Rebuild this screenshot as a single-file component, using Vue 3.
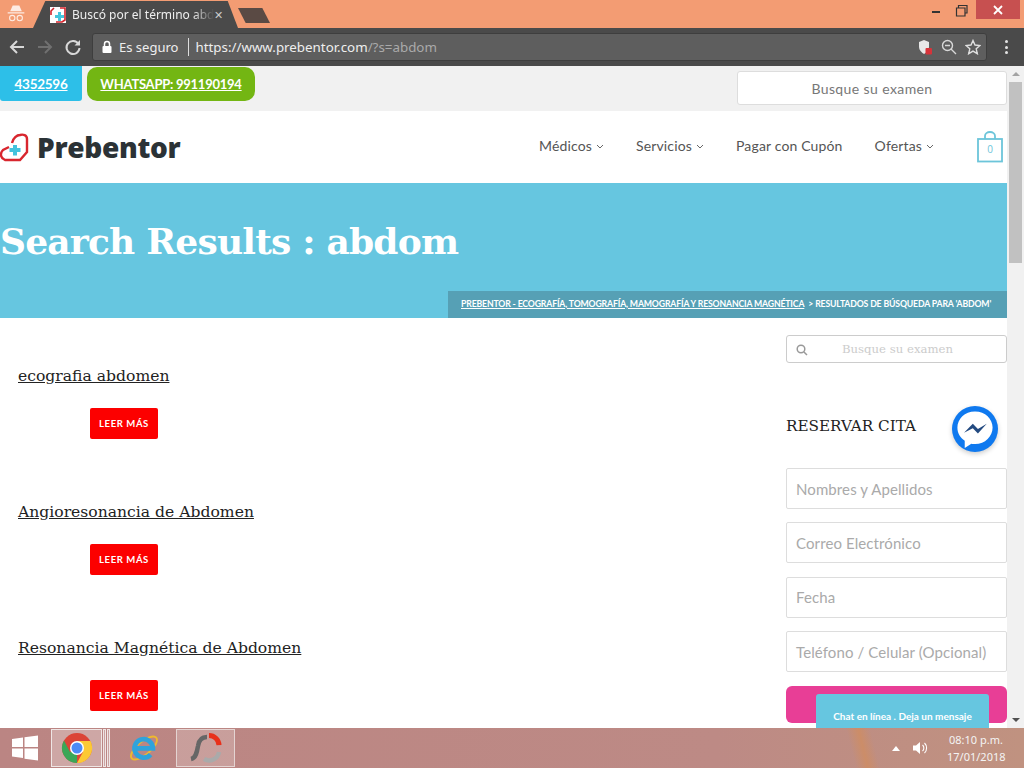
<template>
  <div class="screen">
    <!-- browser tabs -->
    <div class="tabstrip">
      <svg class="incognito" width="20" height="20" viewBox="0 0 24 24">
        <path d="M5 10 L8 3 H16 L19 10 Z M2 11 H22 V12.500 H2 Z" fill="#fff" opacity=".8" />
        <circle cx="7.500" cy="18" r="3.200" fill="none" stroke="#fff" stroke-width="1.300" opacity=".8" />
        <circle cx="16.500" cy="18" r="3.200" fill="none" stroke="#fff" stroke-width="1.300" opacity=".8" />
      </svg>
      <div class="tab">
        <svg class="favicon" width="16" height="16" viewBox="0 0 16 16">
          <rect width="16" height="16" fill="#fff" />
          <path d="M1 8 L1 4 L4 1 M10 1 H15 V13 L12 15 H6" fill="none" stroke="#d4232b" stroke-width="1.600" />
          <path d="M8 5 H11 V8 H14 V11 H11 V14 H8 V11 H5 V8 H8 Z" fill="#45c6dd" />
        </svg>
        <span class="tab-title">Buscó por el término abd</span>
        <span class="tab-close">✕</span>
      </div>
      <div class="new-tab"></div>
      <div class="window-btns">
        <svg width="12" height="12" viewBox="0 0 12 12"><rect x="2" y="7" width="8" height="2" fill="#333" /></svg>
        <svg width="14" height="14" viewBox="0 0 14 14"><path d="M3.500 3.500 V1.500 H12 V9 H10 M1.500 4 H10 V12 H1.500 Z" fill="none" stroke="#333" stroke-width="1.200" /></svg>
        <div class="win-close">
          <svg width="10" height="10" viewBox="0 0 10 10"><path d="M1 1 L9 9 M9 1 L1 9" stroke="#fff" stroke-width="1.800" /></svg>
        </div>
      </div>
    </div>

    <!-- browser toolbar -->
    <div class="toolbar">
      <svg width="18" height="18" viewBox="0 0 18 18"><path d="M16 9 H3 M9 3 L3 9 L9 15" fill="none" stroke="#d8d8d8" stroke-width="2" /></svg>
      <svg width="18" height="18" viewBox="0 0 18 18"><path d="M2 9 H15 M9 3 L15 9 L9 15" fill="none" stroke="#707070" stroke-width="2" /></svg>
      <svg width="18" height="18" viewBox="0 0 18 18"><path d="M14.500 6 A6.500 6.500 0 1 0 15.500 10" fill="none" stroke="#d8d8d8" stroke-width="2" /><path d="M16 2 V7.500 H10.500 Z" fill="#d8d8d8" /></svg>
      <div class="omnibox">
        <svg class="lock" width="12" height="14" viewBox="0 0 12 14"><rect x="1.500" y="6" width="9" height="7" rx="1" fill="#fff" /><path d="M3.500 6 V4 A2.500 2.500 0 0 1 8.500 4 V6" fill="none" stroke="#fff" stroke-width="1.500" /></svg>
        <span class="secure">Es seguro</span>
        <span class="url"><b>https://www.prebentor.com</b>/?s=abdom</span>
        <svg class="shield" width="16" height="16" viewBox="0 0 16 16">
          <path d="M7 1 L12 3 V8 C12 11 9.500 13.500 7 15 C4.500 13.500 2 11 2 8 V3 Z" fill="#e8e8e8" />
          <rect x="8.500" y="9" width="6.500" height="6.500" rx="1" fill="#d6333a" />
        </svg>
        <svg width="16" height="16" viewBox="0 0 16 16"><circle cx="6.500" cy="6.500" r="5" fill="none" stroke="#d8d8d8" stroke-width="1.400" /><path d="M10 10 L15 15 M4 6.500 H9" stroke="#d8d8d8" stroke-width="1.400" /></svg>
        <svg width="16" height="16" viewBox="0 0 16 16"><path d="M8 1.500 L10 6 L15 6.500 L11.200 9.800 L12.300 14.700 L8 12.100 L3.700 14.700 L4.800 9.800 L1 6.500 L6 6 Z" fill="none" stroke="#e0e0e0" stroke-width="1.400" /></svg>
      </div>
      <div class="dots"><i></i><i></i><i></i></div>
    </div>

    <!-- page -->
    <div class="viewport">
      <div class="page">
        <div class="topbar">
          <div class="top-btns">
            <a class="phone">4352596</a>
            <a class="whatsapp">WHATSAPP: 991190194</a>
          </div>
          <div class="top-search">Busque su examen</div>
        </div>

        <header class="header">
          <div class="logo">
            <svg width="30" height="30" viewBox="0 0 30 30">
              <path d="M9 15 L3 18 C0 21 0 26 5 28 H20 L27 20 V7 C27 3 23 2 20 3 C17 3 13 6 12 11" fill="none" stroke="#d8262e" stroke-width="2.400" />
              <path d="M13 13 H17 V16 H20.500 V20 H17 V23.500 H13 V20 H9.500 V16 H13 Z" fill="#43c3dd" />
            </svg>
            <span class="logo-text">Prebentor</span>
          </div>
          <nav class="nav">
            <a v-for="item in nav" :key="item.label" class="nav-item">
              {{ item.label }}
              <svg v-if="item.arrow" width="8" height="6" viewBox="0 0 8 6"><path d="M1 1 L4 4 L7 1" fill="none" stroke="#666" stroke-width="1" /></svg>
            </a>
          </nav>
          <div class="cart">
            <svg width="26" height="32" viewBox="0 0 26 32">
              <path d="M8 8 V5 A5 4 0 0 1 18 5 V8" fill="none" stroke="#6cc5da" stroke-width="1.800" />
              <rect x="1" y="8" width="24" height="22.500" fill="#fff" stroke="#6cc5da" stroke-width="1.800" />
            </svg>
            <span class="cart-count">0</span>
          </div>
        </header>

        <section class="hero">
          <h1 class="hero-title">Search Results : abdom</h1>
          <div class="crumbs">
            <a>PREBENTOR - ECOGRAFÍA, TOMOGRAFÍA, MAMOGRAFÍA Y RESONANCIA MAGNÉTICA</a>
            <span>&gt; RESULTADOS DE BÚSQUEDA PARA 'ABDOM'</span>
          </div>
        </section>

        <div class="content">
          <main class="results">
            <article v-for="r in results" :key="r" class="result">
              <a class="result-title">{{ r }}</a>
              <button class="more">LEER MÁS</button>
            </article>
          </main>
          <aside class="sidebar">
            <div class="side-search">
              <svg width="12" height="12" viewBox="0 0 12 12"><circle cx="5" cy="5" r="3.800" fill="none" stroke="#999" stroke-width="1.500" /><path d="M8 8 L11 11" stroke="#999" stroke-width="1.500" /></svg>
              <span>Busque su examen</span>
            </div>
            <h3 class="side-title">RESERVAR CITA</h3>
            <div class="form">
              <div v-for="f in fields" :key="f" class="field">{{ f }}</div>
              <div class="send"></div>
            </div>
          </aside>
        </div>

        <!-- floating widgets -->
        <div class="messenger">
          <svg width="44" height="44" viewBox="0 0 30 30">
            <path d="M15 3 C8 3 3 8 3 14 C3 18 5 21 8 23 V28 L12.500 25 C13.500 25.300 14 25.300 15 25.300 C22 25.300 27 20 27 14 C27 8 22 3 15 3 Z" fill="#fff" />
            <path d="M7.500 17.500 L13.500 11.500 L17 15 L23 11.500 L17 18 L13.500 14.500 Z" fill="#234a80" />
          </svg>
        </div>
        <div class="chat-tab">Chat en línea . Deja un mensaje</div>
      </div>

      <div class="scrollbar">
        <span class="arrow up"></span>
        <div class="track"><div class="thumb"></div></div>
        <span class="arrow down"></span>
      </div>
    </div>

    <!-- windows taskbar -->
    <div class="taskbar">
      <svg class="start" width="26" height="26" viewBox="0 0 26 26">
        <path d="M0 4 L11 2.500 V12 H0 Z M12.500 2.300 L26 0.500 V12 H12.500 Z M0 13.500 H11 V23 L0 21.500 Z M12.500 13.500 H26 V25.500 L12.500 23.700 Z" fill="#fff" />
      </svg>
      <div class="task active">
        <svg width="32" height="32" viewBox="0 0 32 32">
          <circle cx="16" cy="16" r="15" fill="#db4437" />
          <path d="M16 16 L3 23.500 A15 15 0 0 0 16 31 Z M3 23.500 A15 15 0 0 1 3 8.500 L9 20 Z" fill="#3aa757" />
          <path d="M16 9 H29.500 A15 15 0 0 1 16 31 L22 20 Z" fill="#fcc934" />
          <circle cx="16" cy="16" r="7" fill="#fff" />
          <circle cx="16" cy="16" r="5.500" fill="#4c8bf5" />
        </svg>
      </div>
      <div class="task-edge"></div>
      <div class="task-edge"></div>
      <div class="task ie">
        <svg width="32" height="32" viewBox="0 0 34 34">
          <ellipse cx="17" cy="17" rx="17" ry="7" transform="rotate(-40 17 17)" fill="none" stroke="#efb92e" stroke-width="2" />
          <path d="M7.500 17.500 H26.500 A9.800 9.800 0 1 0 24 24" fill="none" stroke="#2fa3dc" stroke-width="5" />
        </svg>
      </div>
      <div class="task app">
        <svg width="36" height="32" viewBox="0 0 36 32">
          <path d="M3 27 C8 26 9 20 10 14 C11 7 15 5 19 5" fill="none" stroke="#666" stroke-width="4.500" />
          <path d="M21 3.500 A10 10 0 0 1 31 13" fill="none" stroke="#e8301a" stroke-width="5" />
          <path d="M16 27 A10 10 0 0 0 31 20" fill="none" stroke="#aaa" stroke-width="4.500" />
        </svg>
      </div>
      <div class="glow"></div>
      <div class="tray">
        <span class="tray-up"></span>
        <svg width="18" height="16" viewBox="0 0 18 16">
          <path d="M1 5.500 H4 L8 2 V14 L4 10.500 H1 Z" fill="#fff" />
          <path d="M10.500 5 A4 4 0 0 1 10.500 11 M12.500 3 A7 7 0 0 1 12.500 13" fill="none" stroke="#fff" stroke-width="1.100" />
        </svg>
        <div class="clock">
          <div>08:10 p.m.</div>
          <div>17/01/2018</div>
        </div>
      </div>
    </div>
  </div>
</template>

<script setup>
const nav = [
  { label: 'Médicos', arrow: true },
  { label: 'Servicios', arrow: true },
  { label: 'Pagar con Cupón', arrow: false },
  { label: 'Ofertas', arrow: true }
]

const results = ['ecografia abdomen', 'Angioresonancia de Abdomen', 'Resonancia Magnética de Abdomen']

const fields = ['Nombres y Apellidos', 'Correo Electrónico', 'Fecha', 'Teléfono / Celular (Opcional)']
</script>

<style>
html, body { margin: 0; overflow: hidden; }
</style>

<style scoped>
.screen {
  width: 1024px;
  height: 768px;
  display: flex;
  flex-direction: column;
  overflow: hidden;
  font-family: "Open Sans", sans-serif;
  background: #fff;
}

/* tabs */
.tabstrip {
  height: 28px;
  flex: none;
  display: flex;
  align-items: flex-end;
  background: #f39c73;
}
.incognito { margin: 0 0 5px 6px; }
.tab {
  width: 205px;
  height: 27px;
  margin-left: 7px;
  box-sizing: border-box;
  padding-left: 17px;
  display: flex;
  align-items: center;
  background: #4a4a4a;
  clip-path: polygon(0 100%, 6% 0, 95% 0, 100% 100%);
}
.favicon { flex: none; }
.tab-title {
  margin-left: 6px;
  white-space: nowrap;
  font-size: 12px;
  color: #eee;
  font-family: "Noto Sans", sans-serif;
  -webkit-mask-image: linear-gradient(to right, #000 85%, transparent);
  mask-image: linear-gradient(to right, #000 85%, transparent);
}
.tab-close { font-size: 11px; line-height: 14px; color: #ccc; margin-left: auto; margin-right: 16px; }
.new-tab {
  width: 32px;
  height: 15px;
  margin-bottom: 5px;
  background: #5a4a44;
  clip-path: polygon(0 0, 76% 0, 100% 100%, 24% 100%);
}
.window-btns {
  margin-left: auto;
  margin-right: 4px;
  align-self: flex-start;
  display: flex;
  align-items: flex-start;
  gap: 13px;
}
.window-btns svg { margin-top: 4px; }
.window-btns .win-close svg { margin-top: 0; }
.win-close {
  width: 44px;
  height: 19px;
  margin-left: -6px;
  background: #c75050;
  display: flex;
  align-items: center;
  justify-content: center;
}

/* toolbar */
.toolbar {
  height: 38px;
  flex: none;
  display: flex;
  align-items: center;
  box-sizing: border-box;
  padding: 0 9px 0 8px;
  background: #4a4a4a;
  gap: 10px;
}
.omnibox {
  flex: 1;
  height: 28px;
  box-sizing: border-box;
  padding: 0 5px 0 8px;
  display: flex;
  align-items: center;
  gap: 8px;
  background: #5e5e5e;
  border-radius: 3px;
  border: 1px solid #3e3e3e;
  font-family: "Noto Sans", sans-serif;
}
.lock { margin-right: -2px; }
.secure {
  color: #eee;
  padding-right: 10px;
  border-right: 1px solid #ddd;
  font-size: 13px;
  line-height: 18px;
}
.url { color: #aaa; flex: 1; margin-left: -2px; white-space: nowrap; font-size: 13.350px; }
.url b { color: #eee; font-weight: 400; }
.dots {
  width: 18px;
  display: flex;
  flex-direction: column;
  align-items: center;
  gap: 2.500px;
}
.dots i { width: 3px; height: 3px; border-radius: 50%; background: #e4e4e4; }

/* page */
.viewport {
  flex: 1;
  display: flex;
  min-height: 0;
  background: #f1f1f1;
}
.page {
  width: 1007px;
  flex: none;
  position: relative;
  overflow: hidden;
  background: #fff;
}
.topbar {
  height: 45px;
  box-sizing: border-box;
  display: flex;
  justify-content: space-between;
  background: #f1f1f1;
}
.top-btns { display: flex; align-items: flex-start; gap: 5px; }
.phone, .whatsapp {
  height: 35px;
  display: flex;
  align-items: center;
  justify-content: center;
  color: #fff;
  text-decoration: underline;
  font-family: "Lato", sans-serif;
  font-weight: 700;
  font-size: 13.500px;
  letter-spacing: -.25px;
}
.phone {
  width: 82px;
  background: #2dbfe8;
  border-radius: 0 0 3px 3px;
}
.whatsapp {
  width: 168px;
  margin-top: 1px;
  height: 34px;
  background: #73b613;
  border-radius: 10px;
  font-size: 13px;
}
.top-search {
  width: 270px;
  height: 34px;
  margin-top: 5px;
  box-sizing: border-box;
  display: flex;
  align-items: center;
  justify-content: center;
  background: #fff;
  border: 1px solid #ddd;
  border-radius: 3px;
  color: #777;
  font-family: "Lato", sans-serif;
  font-size: 14px;
  letter-spacing: .4px;
}
.header {
  height: 72px;
  display: flex;
  align-items: center;
  background: #fff;
}
.logo { display: flex; align-items: center; gap: 7px; }
.logo-text {
  font-family: "Open Sans", sans-serif;
  font-weight: 800;
  font-size: 28px;
  letter-spacing: -.3px;
  color: #2b3236;
}
.nav {
  margin-left: auto;
  display: flex;
  gap: 32px;
  margin-top: -4px;
}
.nav-item {
  display: flex;
  align-items: center;
  gap: 4px;
  font-family: "Lato", sans-serif;
  font-size: 14px;
  letter-spacing: .15px;
  color: #555;
}
.nav-item svg { margin-top: 3px; }
.cart {
  position: relative;
  width: 26px;
  height: 32px;
  margin: 0 4px 0 43px;
}
.cart-count {
  position: absolute;
  left: 0;
  right: 0;
  top: 11px;
  text-align: center;
  font-size: 10px;
  color: #6cc5da;
}
.hero {
  height: 135px;
  display: flex;
  flex-direction: column;
  background: #66c6e0;
}
.hero-title {
  margin: 0;
  padding-top: 33px;
  font-family: "DejaVu Serif", serif;
  font-weight: 700;
  font-size: 36px;
  line-height: 50px;
  letter-spacing: -.8px;
  color: #fff;
  white-space: nowrap;
}
.crumbs {
  margin-top: auto;
  margin-left: auto;
  width: 559px;
  height: 27px;
  box-sizing: border-box;
  padding: 0 0 3px 13px;
  display: flex;
  align-items: center;
  gap: 4px;
  white-space: nowrap;
  background: #56a0b5;
  color: #fff;
  font-family: "Lato", sans-serif;
  font-weight: 700;
  font-size: 8.700px;
  letter-spacing: -.15px;
}
.crumbs a { text-decoration: underline; }
.content {
  display: flex;
  justify-content: space-between;
}
.results { padding: 48px 0 0 18px; }
.result { height: 136px; }
.result-title {
  display: block;
  font-family: "DejaVu Serif", serif;
  font-size: 15.600px;
  line-height: 20px;
  color: #222;
  text-decoration: underline;
}
.more {
  display: block;
  width: 68px;
  height: 31px;
  margin: 22px 0 0 72px;
  padding: 0;
  border: none;
  border-radius: 2px;
  background: #fc0000;
  color: #fff;
  font-family: "Lato", sans-serif;
  font-weight: 700;
  font-size: 9.500px;
  letter-spacing: .6px;
}
.sidebar { width: 221px; padding-top: 17px; }
.side-search {
  height: 28px;
  box-sizing: border-box;
  padding: 2px 9px 0;
  display: flex;
  align-items: center;
  border: 1px solid #ccc;
  border-radius: 3px;
}
.side-search span {
  margin: -2px 0 0 34px;
  font-family: "DejaVu Serif", serif;
  font-size: 11.700px;
  color: #ccc;
}
.side-title {
  margin: 53px 0 32px;
  font-family: "DejaVu Serif", serif;
  font-weight: 400;
  font-size: 15.200px;
  line-height: 20px;
  color: #222;
}
.form {
  display: flex;
  flex-direction: column;
  gap: 13.400px;
}
.field {
  height: 41px;
  box-sizing: border-box;
  padding-left: 9px;
  display: flex;
  align-items: center;
  border: 1px solid #ddd;
  border-radius: 2px;
  font-family: "Lato", sans-serif;
  font-size: 15px;
  letter-spacing: .1px;
  color: #aaa;
}
.send {
  height: 37px;
  background: #e83e96;
  border-radius: 6px;
}
.messenger {
  position: absolute;
  left: 952px;
  top: 340px;
  width: 46px;
  height: 46px;
  display: flex;
  align-items: center;
  justify-content: center;
  background: #0f79ef;
  border-radius: 50%;
  box-shadow: 0 2px 5px rgba(0, 0, 0, .2);
}
.chat-tab {
  position: absolute;
  left: 816px;
  top: 628px;
  width: 173px;
  height: 40px;
  box-sizing: border-box;
  padding-top: 16px;
  background: #66c6e0;
  border-radius: 3px 3px 0 0;
  text-align: center;
  color: #fff;
  font-family: "Lato", sans-serif;
  font-weight: 700;
  font-size: 10px;
}

/* scrollbar */
.scrollbar {
  width: 17px;
  display: flex;
  flex-direction: column;
  align-items: center;
  background: #f1f1f1;
}
.track { flex: 1; width: 100%; padding: 0 2px; box-sizing: border-box; }
.thumb { height: 181px; background: #c1c1c1; }
.arrow {
  width: 0;
  height: 0;
  margin: 6px 0;
  border-left: 4px solid transparent;
  border-right: 4px solid transparent;
}
.arrow.up { border-bottom: 4px solid #a3a3a3; }
.arrow.down { border-top: 4px solid #505050; }

/* taskbar */
.taskbar {
  height: 40px;
  flex: none;
  position: relative;
  display: flex;
  align-items: center;
  background: linear-gradient(to right, #bb8583, #bd8a85 70%, #c09280);
  overflow: hidden;
}
.start { margin-left: 12px; }
.task {
  height: 38px;
  display: flex;
  align-items: center;
  justify-content: center;
  box-sizing: border-box;
}
.task.active {
  width: 51px;
  margin-left: 13px;
  background: rgba(255, 255, 255, .28);
  border: 1px solid #efe6e5;
}
.task-edge {
  width: 3px;
  height: 38px;
  margin-left: 1px;
  background: rgba(255, 255, 255, .25);
  border: 1px solid #efe6e5;
  box-sizing: border-box;
}
.task.ie { width: 34px; margin-left: 17px; }
.task.app {
  width: 59px;
  margin-left: 15px;
  background: rgba(255, 255, 255, .2);
  border: 1px solid #e4d4d2;
}
.glow {
  position: absolute;
  left: 851px;
  top: 0;
  width: 24px;
  height: 40px;
  background: linear-gradient(to right, transparent, #cc8d68, transparent);
  transform: skewX(14deg);
}
.tray {
  margin-left: auto;
  position: relative;
  display: flex;
  align-items: center;
  padding-right: 19px;
}
.tray-up {
  width: 0;
  height: 0;
  margin-right: 12px;
  border-left: 4px solid transparent;
  border-right: 4px solid transparent;
  border-bottom: 5px solid #fff;
}
.clock {
  margin-left: 17px;
  width: 58px;
  text-align: center;
  font-family: "Noto Sans", sans-serif;
  font-size: 11px;
  line-height: 17px;
  color: #f4f4f4;
  white-space: nowrap;
}
</style>
